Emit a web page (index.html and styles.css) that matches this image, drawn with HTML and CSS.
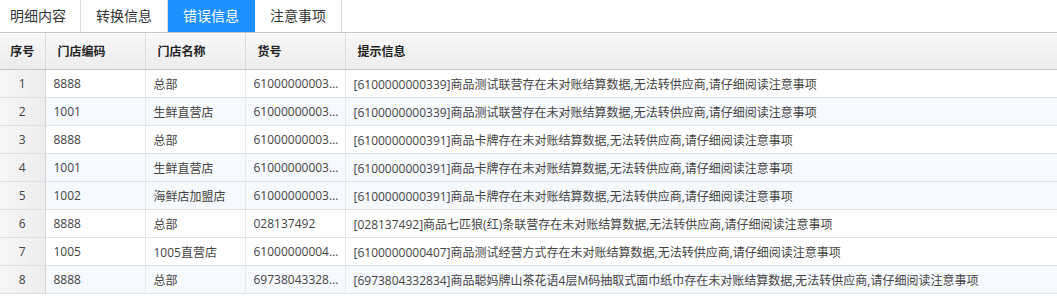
FILE: index.html
```html
<!DOCTYPE html>
<html lang="zh-CN">
  <head>
    <meta charset="UTF-8" />
    <title>错误信息</title>
    <link rel="stylesheet" href="styles.css">
  </head>
  <body>
    <div class="tabs">
      <div class="tab first">明细内容</div>
      <div class="tab">转换信息</div>
      <div class="tab active">错误信息</div>
      <div class="tab">注意事项</div>
    </div>
    <table class="grid">
      <colgroup>
        <col class="c-no">
        <col class="c-code">
        <col class="c-name">
        <col class="c-sku">
        <col>
      </colgroup>
      <thead>
        <tr>
          <th class="no">序号</th>
          <th>门店编码</th>
          <th>门店名称</th>
          <th>货号</th>
          <th>提示信息</th>
        </tr>
      </thead>
      <tbody>
        <tr>
          <td class="no">1</td><td>8888</td><td>总部</td><td>6100000000339</td>
          <td>[6100000000339]商品测试联营存在未对账结算数据,无法转供应商,请仔细阅读注意事项</td>
        </tr>
        <tr class="alt">
          <td class="no">2</td><td>1001</td><td>生鲜直营店</td><td>6100000000339</td>
          <td>[6100000000339]商品测试联营存在未对账结算数据,无法转供应商,请仔细阅读注意事项</td>
        </tr>
        <tr>
          <td class="no">3</td><td>8888</td><td>总部</td><td>6100000000391</td>
          <td>[6100000000391]商品卡牌存在未对账结算数据,无法转供应商,请仔细阅读注意事项</td>
        </tr>
        <tr class="alt">
          <td class="no">4</td><td>1001</td><td>生鲜直营店</td><td>6100000000391</td>
          <td>[6100000000391]商品卡牌存在未对账结算数据,无法转供应商,请仔细阅读注意事项</td>
        </tr>
        <tr class="alt">
          <td class="no">5</td><td>1002</td><td>海鲜店加盟店</td><td>6100000000391</td>
          <td>[6100000000391]商品卡牌存在未对账结算数据,无法转供应商,请仔细阅读注意事项</td>
        </tr>
        <tr>
          <td class="no">6</td><td>8888</td><td>总部</td><td>028137492</td>
          <td>[028137492]商品七匹狼(红)条联营存在未对账结算数据,无法转供应商,请仔细阅读注意事项</td>
        </tr>
        <tr>
          <td class="no">7</td><td>1005</td><td>1005直营店</td><td>6100000000407</td>
          <td>[6100000000407]商品测试经营方式存在未对账结算数据,无法转供应商,请仔细阅读注意事项</td>
        </tr>
        <tr class="alt">
          <td class="no">8</td><td>8888</td><td>总部</td><td>6973804332834</td>
          <td>[6973804332834]商品聪妈牌山茶花语4层M码抽取式面巾纸巾存在未对账结算数据,无法转供应商,请仔细阅读注意事项</td>
        </tr>
      </tbody>
    </table>
  </body>
</html>
```
FILE: styles.css
```css
body {
  margin: 0;
  background: #fff;
  font-family: "Open Sans", "Noto Sans CJK SC", sans-serif;
  color: #333;
}
.tabs {
  display: flex;
  height: 32px;
  border-bottom: 1px solid #c8c8c8;
}
.tab {
  padding: 0 15px;
  line-height: 32px;
  font-size: 14px;
  white-space: nowrap;
  color: #333;
  border-right: 1px solid #dcdcdc;
}
.tab.first {
  padding-left: 10px;
  padding-right: 14px;
}
.tab.active {
  background-color: #1e90ff;
  color: #fff;
  border-right-color: #1e90ff;
}
.grid {
  width: 100%;
  border-collapse: collapse;
  table-layout: fixed;
  font-size: 12px;
}
.c-no { width: 45px; }
.c-code { width: 100px; }
.c-name { width: 100px; }
.c-sku { width: 100px; }
.grid th {
  height: 36px;
  padding: 0 12px;
  text-align: left;
  font-weight: bold;
  white-space: nowrap;
  color: #222;
  background: linear-gradient(#f8f8f8, #ececec);
  border-right: 1px solid #dcdcdc;
  border-bottom: 1px solid #c6c6c6;
}
.grid td {
  height: 27px;
  padding: 0 4px 0 8px;
  white-space: nowrap;
  overflow: hidden;
  text-overflow: ellipsis;
  color: #444;
  border-right: 1px solid #e8e8e8;
  border-bottom: 1px solid #dde0e4;
}
.grid th.no,
.grid td.no {
  padding: 0;
  text-align: center;
}
.grid td.no {
  background: linear-gradient(90deg, #f6f6f6, #ececec);
  border-right: 1px solid #d6d6d6;
}
.grid tr.alt td {
  background-color: #f6f9fd;
}
.grid tr.alt td.no {
  background: linear-gradient(90deg, #f6f6f6, #ececec);
}
.grid th:last-child,
.grid td:last-child {
  border-right: none;
}
```
